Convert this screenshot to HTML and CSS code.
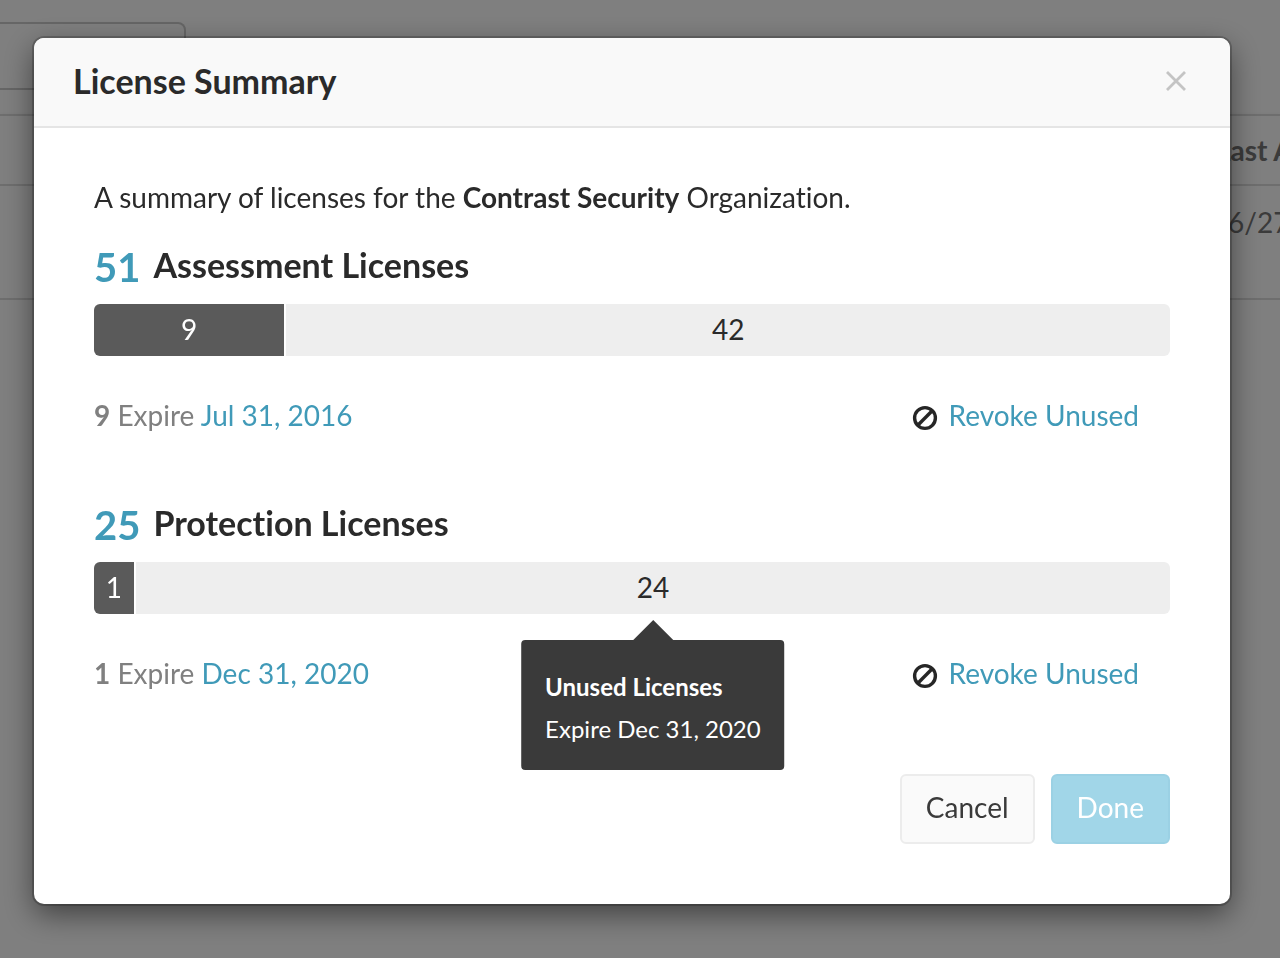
FILE: index.html
```html
<!DOCTYPE html>
<html lang="en">
<head>
<meta charset="utf-8">
<title>License Summary</title>
<link rel="stylesheet" href="styles.css">
</head>
<body>
<main class="page">
  <div class="filter"></div>
  <table class="grid">
    <thead>
      <tr><th></th><th class="grid-date">Last A</th></tr>
    </thead>
    <tbody>
      <tr><td></td><td class="grid-date">6/27</td></tr>
    </tbody>
  </table>
</main>

<div class="backdrop">
  <section class="modal" role="dialog" aria-modal="true" aria-labelledby="modal-title">
    <header class="modal-header">
      <h1 class="modal-title" id="modal-title">License Summary</h1>
      <button class="close" type="button" aria-label="Close">
        <svg width="20" height="20" viewBox="0 0 20 20" aria-hidden="true"><path d="M1 1 19 19M19 1 1 19" fill="none" stroke="#c4c4c4" stroke-width="2.8"/></svg>
      </button>
    </header>

    <div class="modal-body">
      <p class="intro">A summary of licenses for the <strong>Contrast Security</strong> Organization.</p>

      <section class="license">
        <h2 class="license-heading"><span class="count">51</span><span class="kind">Assessment Licenses</span></h2>
        <div class="bar">
          <div class="used" style="width: 17.7%">9</div>
          <div class="unused">42</div>
        </div>
        <div class="details">
          <p class="expiry"><strong>9</strong> Expire <a href="#">Jul 31, 2016</a></p>
          <a class="revoke" href="#">
            <svg width="26" height="26" viewBox="0 0 26 26" aria-hidden="true"><g fill="none" stroke="#262626"><circle cx="13" cy="13" r="10.4" stroke-width="3.4"/><path d="M5.8 20.2 20.2 5.8" stroke-width="3.4"/></g></svg>
            <span>Revoke Unused</span>
          </a>
        </div>
      </section>

      <section class="license">
        <h2 class="license-heading"><span class="count">25</span><span class="kind">Protection Licenses</span></h2>
        <div class="bar">
          <div class="used" style="width: 3.7%">1</div>
          <div class="unused">24
            <div class="tooltip" role="tooltip"><strong>Unused Licenses</strong><span>Expire Dec 31, 2020</span></div>
          </div>
        </div>
        <div class="details">
          <p class="expiry"><strong>1</strong> Expire <a href="#">Dec 31, 2020</a></p>
          <a class="revoke" href="#">
            <svg width="26" height="26" viewBox="0 0 26 26" aria-hidden="true"><g fill="none" stroke="#262626"><circle cx="13" cy="13" r="10.4" stroke-width="3.4"/><path d="M5.8 20.2 20.2 5.8" stroke-width="3.4"/></g></svg>
            <span>Revoke Unused</span>
          </a>
        </div>
      </section>

      <footer class="actions">
        <button class="button button-cancel" type="button">Cancel</button>
        <button class="button button-done" type="button">Done</button>
      </footer>
    </div>
  </section>
</div>
</body>
</html>
```

FILE: styles.css
```css
* {
  box-sizing: border-box;
}

body {
  margin: 0;
  background: #fff;
  color: #2a2a2a;
  font: 28px/40px Lato, "Liberation Sans", sans-serif;
  font-variant-ligatures: none;
}

h1,
h2,
p {
  margin: 0;
}

a {
  color: #409ab8;
  text-decoration: none;
}

.page {
  padding-top: 22px;
  overflow: hidden;
}

.filter {
  width: 186px;
  height: 68px;
  border: 2px solid #ccc;
  border-left: 0;
  border-radius: 0 8px 8px 0;
}

.grid {
  width: 100%;
  margin-top: 24px;
  border-collapse: separate;
  border-spacing: 0;
  table-layout: fixed;
  border-bottom: 2px solid #ddd;
  box-shadow: 0 2px 6px rgba(0, 0, 0, 0.1);
}

.grid th,
.grid td {
  padding: 0;
  border-top: 2px solid #ddd;
  color: #777;
  text-align: left;
  white-space: nowrap;
}

.grid th {
  height: 70px;
}

.grid td {
  height: 114px;
  padding-top: 16px;
  vertical-align: top;
}

.grid .grid-date {
  width: 64px;
}

.grid td.grid-date {
  padding-left: 12px;
}

.backdrop {
  position: fixed;
  inset: 0;
  padding: 38px 50px 38px 34px;
  overflow: auto;
  background: rgba(0, 0, 0, 0.5);
}

.modal {
  border-radius: 10px;
  background: #fff;
  box-shadow: 0 0 0 2px rgba(0, 0, 0, 0.2), 0 10px 30px rgba(0, 0, 0, 0.5);
}

.modal-header {
  display: flex;
  align-items: center;
  justify-content: space-between;
  height: 90px;
  padding: 0 44px 2px 39px;
  border-bottom: 2px solid #e5e5e5;
  border-radius: 10px 10px 0 0;
  background: #f9f9f9;
}

.modal-title {
  font-size: 34px;
  line-height: 48px;
}

.close {
  display: flex;
  padding: 0;
  border: 0;
  background: none;
}

.modal-body {
  padding: 49px 60px 60px;
}

.license {
  margin-top: 63px;
}

.intro + .license {
  margin-top: 23px;
}

.license-heading {
  display: flex;
  align-items: flex-start;
  gap: 13px;
  font-size: 34px;
  line-height: 50px;
}

.count {
  color: #409ab8;
  font-size: 40px;
  line-height: 54px;
}

.bar {
  display: flex;
  gap: 2px;
  margin-top: 10px;
  line-height: 50px;
  text-align: center;
}

.used,
.unused {
  padding-bottom: 2px;
}

.used {
  border-radius: 6px 0 0 6px;
  background: #5a5a5a;
  color: #fff;
}

.unused {
  position: relative;
  flex: 1;
  border-radius: 0 6px 6px 0;
  background: #eee;
}

.tooltip {
  position: absolute;
  top: calc(100% + 26px);
  left: 50%;
  display: flex;
  flex-direction: column;
  padding: 26px 24px 20px;
  border-radius: 4px;
  background: #3a3a3a;
  color: #fff;
  font-size: 24px;
  line-height: 42px;
  text-align: left;
  white-space: nowrap;
  transform: translateX(-50%);
}

.tooltip::before {
  content: "";
  position: absolute;
  bottom: 100%;
  left: 50%;
  margin-left: -20px;
  border: 20px solid transparent;
  border-top: 0;
  border-bottom-color: #3a3a3a;
}

.details {
  display: flex;
  justify-content: space-between;
  margin-top: 39px;
  padding-right: 31px;
}

.expiry {
  color: #808080;
}

.revoke {
  display: flex;
  align-items: center;
  gap: 11px;
}

.revoke svg {
  margin-top: 6px;
}

.actions {
  display: flex;
  justify-content: flex-end;
  gap: 16px;
  margin-top: 81px;
}

.button {
  height: 70px;
  padding: 0 24px 4px;
  border: 2px solid #ececec;
  border-radius: 6px;
  background: #fafafa;
  color: #3a3a3a;
  font: inherit;
}

.button-done {
  border-color: #9bd1e4;
  background: #a1d6e8;
  color: #fff;
}
```
